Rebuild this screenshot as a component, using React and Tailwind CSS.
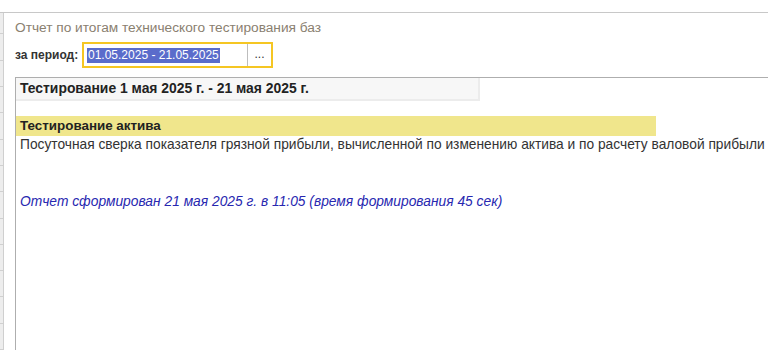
import React from 'react';

const stripRows = Array.from({ length: 12 });

const ReportHeader = () => (
  <div className="pt-[7px]">
    <div className="text-[13.7px] leading-[16px] text-[#8a8070]">
      Отчет по итогам технического тестирования баз
    </div>

    {/* period */}
    <div className="flex items-center mt-[6px] h-[26px]">
      <span className="text-[12px] font-bold text-[#333] w-[67px]">за период:</span>
      <div className="flex h-[26px] w-[191px] border-2 border-[#f5c623] bg-white">
        <div className="flex items-center flex-1 pl-[3px]">
          <span className="bg-[#5a6ccb] text-white text-[12px] leading-[15px] px-[1px]">
            01.05.2025 - 21.05.2025
          </span>
        </div>
        <div className="w-[24px] border-l border-[#bdbdbd] flex items-center justify-center text-[12px] text-[#333] pb-[2px]">
          ...
        </div>
      </div>
    </div>
  </div>
);

const App = () => {
  return (
    <div
      className="w-[768px] h-[350px] bg-white overflow-hidden"
      style={{ fontFamily: '"Liberation Sans", Arial, sans-serif' }}
    >
      <div className="h-[12px]" />
      <div className="flex border-t border-[#c8c8c8] h-[338px]">
        {/* ================= LEFT STRIP ================= */}
        <div className="w-[4px] bg-[#ededed] border-r border-[#cfcfcf] flex flex-col shrink-0">
          <div className="h-[25px] border-b border-[#d0d0d0]" />
          {stripRows.map((_, i) => (
            <div key={i} className="h-[26.3px] border-b border-[#d0d0d0] shrink-0" />
          ))}
        </div>

        {/* ================= CONTENT ================= */}
        <div className="flex-1 flex flex-col pl-[11px] min-w-0">
          <ReportHeader />

          <div className="mt-[9px] flex-1 border-t border-l border-[#aeaeae] text-[13.75px] text-[#333] whitespace-nowrap">
            <div className="w-[464px] h-[23px] bg-[#f7f7f7] border-r-2 border-b-2 border-[#ececec] flex items-center pl-[4px] font-bold text-[13.9px] text-[#222]">
              Тестирование 1 мая 2025 г. - 21 мая 2025 г.
            </div>

            <div className="mt-[15px] w-[640px] h-[20px] bg-[#f0e68c] flex items-center pl-[4px] font-bold text-[13.4px] text-[#222]">
              Тестирование актива
            </div>
            <div className="pl-[4px] leading-[18px]">
              Посуточная сверка показателя грязной прибыли, вычисленной по изменению актива и по расчету валовой прибыли
            </div>

            <div className="mt-[39px] pl-[4px] italic text-[#2727b0] leading-[18px] text-[13.8px]">
              Отчет сформирован 21 мая 2025 г. в 11:05 (время формирования 45 сек)
            </div>
          </div>
        </div>
      </div>
    </div>
  );
};

export default App;
